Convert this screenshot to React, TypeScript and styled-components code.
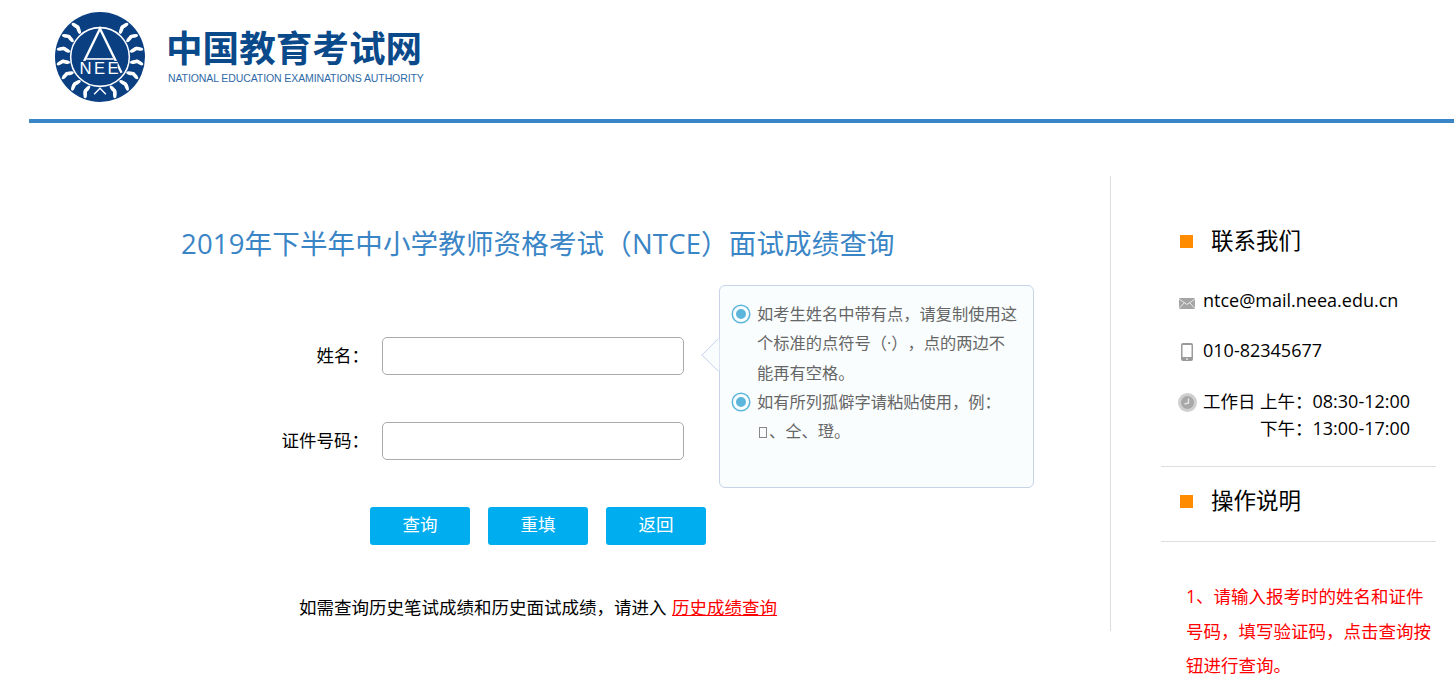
import styled, { createGlobalStyle } from "styled-components";

const FONT = `"Open Sans", "Noto Sans CJK SC", sans-serif`;

const GlobalStyle = createGlobalStyle`
    html, body {
        margin: 0;
        padding: 0;
        background: #fff;
        overflow: hidden;
    }
    body {
        font-family: ${FONT};
        font-size: 18px;
        color: #000;
        text-spacing-trim: space-all;
    }
`;

const Page = styled.div`
    width: 1454px;
    height: 693px;
    overflow: hidden;
`;

const Header = styled.header`
    margin-left: 29px;
    height: 107px;
    border-bottom: 4px solid #3a85c6;
    padding-left: 26px;
    padding-top: 12px;
    display: flex;
    gap: 23px;
`;

const LogoMark = styled.svg`
    width: 90px;
    height: 90px;
    flex: none;
`;

const LogoWords = styled.div`
    padding-top: 11px;
`;

const LogoTitle = styled.div`
    font-family: "Noto Sans CJK SC", sans-serif;
    font-size: 36.6px;
    line-height: 48px;
    font-weight: 700;
    color: #0b4a8a;
    margin-left: -2px;
`;

const LogoSub = styled.div`
    font-family: "Liberation Sans", sans-serif;
    font-size: 10.5px;
    line-height: 14px;
    letter-spacing: -0.1px;
    color: #2f6aa6;
    white-space: nowrap;
`;

const Body = styled.div`
    display: flex;
    margin-top: 53px;
`;

const Main = styled.main`
    width: 1111px;
    height: 455px;
    box-sizing: border-box;
    border-right: 1px solid #ddd;
    padding: 46px 0 0 181px;
`;

const Title = styled.h1`
    margin: 0;
    font-size: 27.5px;
    line-height: 44px;
    font-weight: 400;
    letter-spacing: 0.17px;
    color: #3a85c6;
    white-space: nowrap;
`;

const FormArea = styled.div`
    display: flex;
    margin-top: 19px;
`;

const FormColumn = styled.form`
    width: 503px;
    padding-top: 52px;
    flex: none;
`;

const Field = styled.div`
    display: flex;
    align-items: center;
    height: 38px;
    margin-bottom: 47px;
`;

const Label = styled.label`
    width: 201px;
    flex: none;
    box-sizing: border-box;
    padding: 0 13px 3px 0;
    text-align: right;
    font-size: 17.5px;
    white-space: nowrap;
`;

const Input = styled.input`
    width: 302px;
    height: 38px;
    box-sizing: border-box;
    border: 1px solid #aaa;
    border-radius: 5px;
    background: #fff;
    outline: none;
`;

const Buttons = styled.div`
    display: flex;
    gap: 18px;
    margin: 0 0 0 189px;
`;

const Button = styled.button`
    width: 100px;
    height: 38px;
    border: 0;
    border-radius: 3px;
    background: #00aeef;
    color: #fff;
    font-family: ${FONT};
    font-size: 17.5px;
    padding: 0 0 5px;
`;

const Tip = styled.aside`
    position: relative;
    margin-left: 35px;
    width: 315px;
    height: 203px;
    box-sizing: border-box;
    border: 1px solid #c8d3ea;
    border-radius: 6px;
    background: #f9fdfe;
    padding: 14px 14px 0 37px;
    font-size: 16.25px;
    line-height: 29.25px;
    color: #666;

    &::before {
        content: "";
        position: absolute;
        left: -14px;
        top: 57px;
        width: 24px;
        height: 24px;
        background: #f9fdfe;
        border-left: 1px solid #c8d3ea;
        border-bottom: 1px solid #c8d3ea;
        box-sizing: border-box;
        transform: rotate(45deg);
        clip-path: polygon(0 0, 8% 0, 100% 92%, 100% 100%, 0 100%);
    }
`;

const TipItem = styled.p`
    position: relative;
    margin: 0;

    &::before {
        content: "";
        position: absolute;
        left: -24px;
        top: 6px;
        width: 10px;
        height: 10px;
        border-radius: 50%;
        background: #5cb6dc;
        border: 3px solid #f9fdfe;
        box-shadow: 0 0 0 1.5px #5cb6dc;
    }
`;

// the rare character the page could not render shows as an empty box
const MissingGlyph = styled.span`
    display: inline-block;
    box-sizing: border-box;
    width: 8px;
    height: 11px;
    margin: 0 2px;
    border: 1px solid #888;
    vertical-align: -1px;
`;

const HistoryNote = styled.p`
    margin: 49px 0 0 118px;
    font-size: 17.5px;
    line-height: 26px;
    white-space: nowrap;

    a {
        margin-left: 1px;
        color: #f00;
        text-decoration: underline;
    }
`;

const Side = styled.aside`
    width: 275px;
    margin-left: 50px;
    flex: none;
`;

const SideHeading = styled.h2<{ $first?: boolean }>`
    display: flex;
    align-items: center;
    gap: 18px;
    margin: 0;
    padding: 0 0 ${(p) => (p.$first ? 0 : 6)}px 19px;
    box-sizing: border-box;
    height: ${(p) => (p.$first ? 130 : 74)}px;
    font-size: 22.5px;
    font-weight: 400;
    line-height: 30px;
`;

const ContactList = styled.div`
    padding-left: 16px;
    margin-top: -19px;
`;

const ContactRow = styled.div<{ $gap: number }>`
    display: flex;
    align-items: flex-start;
    gap: 6px;
    font-size: 18px;
    line-height: 27px;
    margin-bottom: ${(p) => p.$gap}px;
    white-space: nowrap;
`;

const IconSlot = styled.span`
    width: 20px;
    height: 27px;
    flex: none;
    display: flex;
    align-items: center;
    justify-content: center;
`;

const Icon = styled.svg<{ $nudge?: number }>`
    margin-top: ${(p) => p.$nudge ?? 0}px;
    flex: none;
`;

const Bullet = styled.i`
    width: 13px;
    height: 13px;
    background: #ff8c00;
    flex: none;
`;

const Rule = styled.hr`
    margin: 0;
    border: 0;
    border-top: 1px solid #ddd;
`;

const Hours = styled.div`
    display: grid;
    grid-template-columns: 57px auto;
`;

const CjkText = styled.span`
    font-size: 17.5px;
`;

const Steps = styled.p`
    margin: 37px 0 0 25px;
    font-size: 17.5px;
    line-height: 34.5px;
    color: #f00;
`;

// laurel branch: stations measured in degrees from the top of the disc
const stations = [38, 58, 78, 98, 118, 138, 158];

function leafPair(deg: number, side: 1 | -1) {
    const a = (deg * Math.PI) / 180;
    const at = (r: number) => [46 + side * r * Math.sin(a), 46 - r * Math.cos(a)];
    const [ix, iy] = at(35.5);
    const [ox, oy] = at(40.5);
    const tangent = side * (deg - 90);
    return [
        { x: ix, y: iy, rot: tangent - side * 18 },
        { x: ox, y: oy, rot: tangent + side * 22 },
    ];
}

function Logo() {
    const leaves = stations.flatMap((deg) => [...leafPair(deg, 1), ...leafPair(deg, -1)]);
    return (
        <LogoMark viewBox="0 0 92 92" role="img" aria-label="NEEA">
            <circle cx="46" cy="46" r="46" fill="#0a3f82" />
            {leaves.map((l, i) => (
                <ellipse
                    key={i}
                    cx={l.x}
                    cy={l.y}
                    rx="4.6"
                    ry="1.9"
                    fill="#fff"
                    transform={`rotate(${l.rot} ${l.x} ${l.y})`}
                />
            ))}
            <circle cx="46" cy="46" r="30" fill="#0a3f82" stroke="#fff" strokeWidth="1.6" />
            <path d="M24 62 L46 17 L68 62" fill="none" stroke="#fff" strokeWidth="2.4" />
            <path d="M32 48 H60" stroke="#fff" strokeWidth="1.6" />
            <rect x="23" y="50" width="41" height="14" fill="#0a3f82" />
            <text x="25" y="63" fontFamily="Liberation Sans" fontSize="17" fill="#fff" textLength="40">
                NEE
            </text>
            <path d="M40 84 L46 78 L52 84" fill="none" stroke="#fff" strokeWidth="1.4" />
        </LogoMark>
    );
}

function MailIcon() {
    return (
        <Icon width="16" height="11" viewBox="0 0 16 11" $nudge={5}>
            <rect width="16" height="11" rx="1" fill="#a5a5a5" />
            <path d="M0 1 L8 6.5 L16 1 M0 10.5 L5.5 4.5 M16 10.5 L10.5 4.5" stroke="#e6e6e6" fill="none" />
        </Icon>
    );
}

function PhoneIcon() {
    return (
        <Icon width="12" height="18" viewBox="0 0 12 18" $nudge={2}>
            <rect width="12" height="18" rx="2" fill="#9a9a9a" />
            <rect x="1.5" y="2" width="9" height="12" fill="#fff" />
            <circle cx="6" cy="16" r="1" fill="#e6e6e6" />
        </Icon>
    );
}

function ClockIcon() {
    return (
        <Icon width="19" height="19" viewBox="0 0 19 19" $nudge={1}>
            <circle cx="9.5" cy="9.5" r="9.5" fill="#cfcfcf" />
            <circle cx="9.5" cy="9.5" r="6.5" fill="#a8a8a8" />
            <path d="M10.5 5.5 V10 L6.5 11" stroke="#e6e6e6" strokeWidth="1.4" fill="none" />
        </Icon>
    );
}

export default function App() {
    return (
        <Page>
            <GlobalStyle />
            <Header>
                <Logo />
                <LogoWords>
                    <LogoTitle>中国教育考试网</LogoTitle>
                    <LogoSub>NATIONAL EDUCATION EXAMINATIONS AUTHORITY</LogoSub>
                </LogoWords>
            </Header>
            <Body>
                <Main>
                    <Title>2019年下半年中小学教师资格考试（NTCE）面试成绩查询</Title>
                    <FormArea>
                        <FormColumn>
                            <Field>
                                <Label>姓名：</Label>
                                <Input />
                            </Field>
                            <Field>
                                <Label>证件号码：</Label>
                                <Input />
                            </Field>
                        </FormColumn>
                        <Tip>
                            <TipItem>如考生姓名中带有点，请复制使用这个标准的点符号（·），点的两边不能再有空格。</TipItem>
                            <TipItem>
                                如有所列孤僻字请粘贴使用，例：
                                <br />
                                <MissingGlyph />、仝、璒。
                            </TipItem>
                        </Tip>
                    </FormArea>
                    <Buttons>
                        <Button type="button">查询</Button>
                        <Button type="button">重填</Button>
                        <Button type="button">返回</Button>
                    </Buttons>
                    <HistoryNote>
                        如需查询历史笔试成绩和历史面试成绩，请进入 <a href="#history">历史成绩查询</a>
                    </HistoryNote>
                </Main>
                <Side>
                    <SideHeading $first>
                        <Bullet />
                        联系我们
                    </SideHeading>
                    <ContactList>
                        <ContactRow $gap={23}>
                            <IconSlot><MailIcon /></IconSlot>
                            ntce@mail.neea.edu.cn
                        </ContactRow>
                        <ContactRow $gap={24}>
                            <IconSlot><PhoneIcon /></IconSlot>
                            010-82345677
                        </ContactRow>
                        <ContactRow $gap={24}>
                            <IconSlot><ClockIcon /></IconSlot>
                            <Hours>
                                <CjkText>工作日</CjkText>
                                <span><CjkText>上午：</CjkText>08:30-12:00</span>
                                <span />
                                <span><CjkText>下午：</CjkText>13:00-17:00</span>
                            </Hours>
                        </ContactRow>
                    </ContactList>
                    <Rule />
                    <SideHeading>
                        <Bullet />
                        操作说明
                    </SideHeading>
                    <Rule />
                    <Steps>1、请输入报考时的姓名和证件号码，填写验证码，点击查询按钮进行查询。</Steps>
                </Side>
            </Body>
        </Page>
    );
}
